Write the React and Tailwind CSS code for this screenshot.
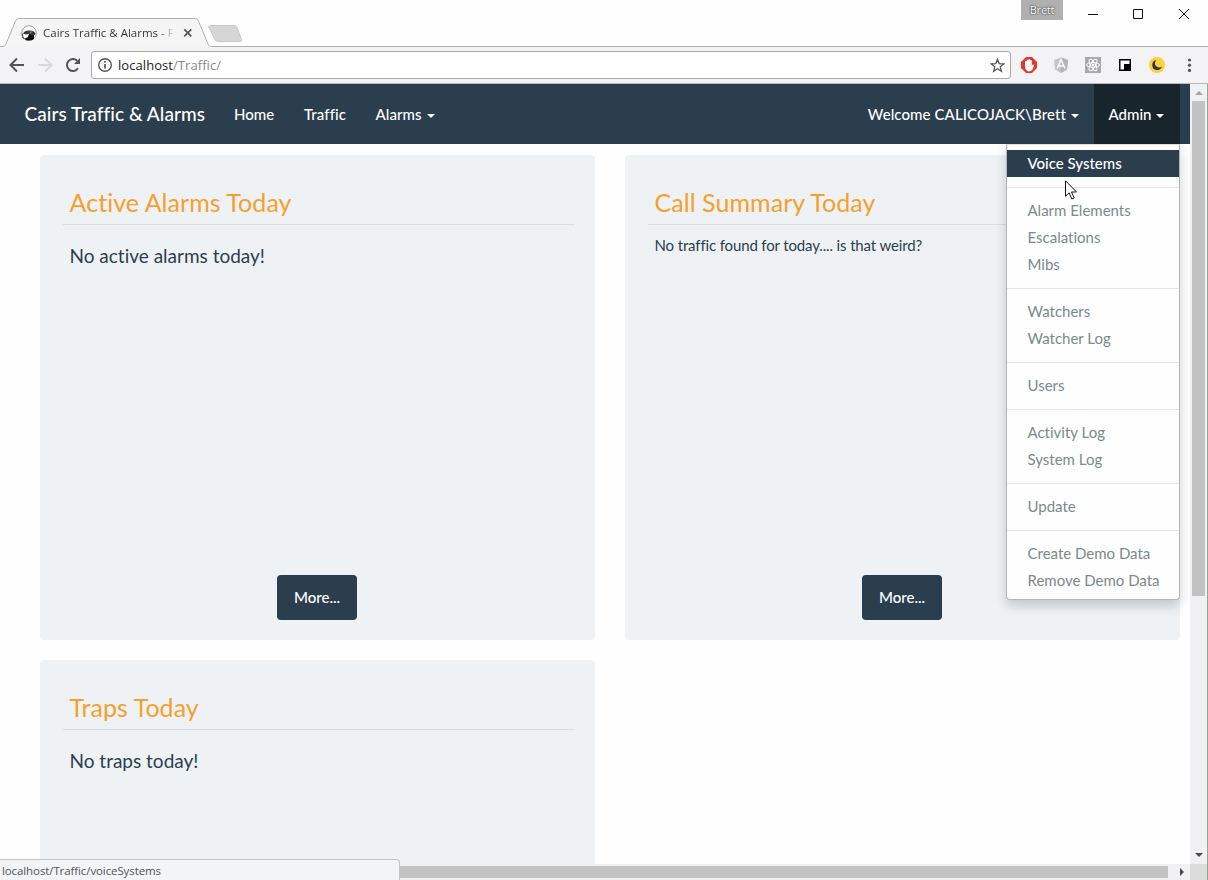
import React from "react";

const Caret = () => (
  <svg className="ml-[5px] mt-[3px] h-1 w-2" viewBox="0 0 8 4"><path d="M0 0h8L4 4z" fill="currentColor" /></svg>
);

const groups = [
  ["Alarm Elements", "Escalations", "Mibs"],
  ["Watchers", "Watcher Log"],
  ["Users"],
  ["Activity Log", "System Log"],
  ["Update"],
  ["Create Demo Data", "Remove Demo Data"],
];

function TabStrip() {
  return (
    <div className="relative flex h-[47px] bg-[#fefefe]">
      <svg className="absolute inset-0 h-[47px] w-[1208px]" viewBox="0 0 1208 47" fill="none">
        <path d="M0 46.5H3Q5 46.5 6 44L15.500 21Q16.500 18.500 18.500 18.500H195.500Q197.500 18.500 198.500 21L208 44Q209 46.500 211.500 46.500V47H0z" fill="#f5f5f6" />
        <path d="M0 46.500H3Q5 46.500 6 44L15.500 21Q16.500 18.500 18.500 18.500H195.500Q197.500 18.500 198.500 21L208 44Q209 46.500 211.500 46.500H1208" stroke="#b0b0b0" />
        <path d="M210.500 25.500H234Q236 25.500 237 27.500L241.500 39.500Q242 41.500 240 41.500H218Q216 41.500 215 39.500L208.800 27.500Q208 25.500 210.500 25.500z" fill="#d6d6d6" stroke="#c8c8c8" />
      </svg>
      <div className="relative mt-[19px] flex h-7 w-52 items-center pl-[21px]">
        <svg className="h-4 w-4" viewBox="0 0 16 16">
          <circle cx="8" cy="8" r="7.300" fill="#f8f8f8" stroke="#888" strokeWidth=".8" />
          <path d="M2 8.500Q4 5 9 5.500Q13.500 5.500 14.500 9L13 10.500 9 8.500 5 9.500z" fill="#333" />
          <path d="M8 8.500l5 1.500V14Q9.500 16.500 4.500 15L4 13.500 7 12z" fill="#111" />
          <path d="M1.500 8.500V12l2 2.200" stroke="#555" strokeWidth="1.200" fill="none" />
          <path d="M8 6.800l3-.4-1 1.600z" fill="#bbb" />
        </svg>
        <span className="ml-1.5 h-4 w-[132px] overflow-hidden whitespace-nowrap bg-gradient-to-r from-[#333] from-88% to-transparent bg-clip-text text-[11.500px] leading-4 text-transparent">Cairs Traffic &amp; Alarms - F</span>
        <svg className="ml-2 h-2.5 w-2.5" viewBox="0 0 10 10"><path d="M1.300 1.300l7 7m0-7l-7 7" stroke="#555" strokeWidth="1.700" /></svg>
      </div>
      <div className="relative ml-auto mr-[15px] flex">
        <div className="h-5 w-[42px] bg-[#b0b0b0] text-center text-[11px] leading-5 tracking-[-0.2px] text-white [text-shadow:0_0_2px_#333,0_0_1px_#333]">Brett</div>
        <svg className="ml-[23px] h-7 w-[107px]" viewBox="0 0 107 28" fill="none" stroke="#111">
          <path d="M2 14.500h10M47.500 9.500h9v9h-9zM93 9l10 10m0-10l-10 10" />
        </svg>
      </div>
    </div>
  );
}

function Toolbar() {
  return (
    <div className="flex h-[37px] items-center border-b border-[#b9b9bd] bg-[#f3f3f5] pl-[9px]">
      <svg className="h-4 w-[72px]" viewBox="0 0 72 16" fill="none" strokeWidth="2">
        <path d="M15 8H2M8 1.500L1.500 8 8 14.500" stroke="#555" />
        <path d="M29 8h13M36 1.500L42.500 8 36 14.500" stroke="#dadada" />
        <path d="M69 11.300A6 6 0 1 1 68.200 3.800" stroke="#555" />
        <path d="M71 1v6h-6z" fill="#555" />
      </svg>
      <div className="ml-[10px] flex h-7 w-[920px] items-center rounded-[3px] border border-[#a9a9ac] bg-white px-[5px]">
        <svg className="h-4 w-4" viewBox="0 0 16 16" fill="none" stroke="#555" strokeWidth="1.400"><circle cx="8" cy="8" r="6.300" /><path d="M8 7v4.500M8 4v1.800" strokeWidth="1.700" /></svg>
        <span className="ml-[5px] pt-px text-[13px] tracking-[0.06px] text-[#222]">localhost<span className="text-[#888]">/Traffic/</span></span>
        <svg className="ml-auto h-[15px] w-[15px]" viewBox="0 0 15 15" fill="none" stroke="#555" strokeWidth="1.300"><path d="M7.500 1.400l1.700 4.200 4.500.3-3.500 2.900 1.200 4.400-3.900-2.500-3.900 2.500 1.200-4.400-3.500-2.900 4.500-.3z" /></svg>
      </div>
      <div className="ml-[10px] flex gap-4">
        <svg className="h-4 w-4" viewBox="0 0 16 16"><path d="M5 0h6l5 5v6l-5 5H5l-5-5V5z" fill="#dd3a2b" /><path d="M4 8V4.500a.9.900 0 0 1 1.700 0V3a.9.900 0 0 1 1.700 0v-.5a.9.900 0 0 1 1.700 0V3.500a.9.900 0 0 1 1.700 0V9l1-1.500q1.300-.3 1.200 1L11.500 12.500Q10 14.500 8 14.500T4.500 12z" fill="#fff" /></svg>
        <svg className="h-4 w-4" viewBox="0 0 16 16"><path d="M8 .5l7 2.500-1 9.500L8 16l-6-3.500L1 3z" fill="#c4c4c4" /><path d="M8 .5l7 2.500-1 9.500L8 16z" fill="#b4b4b4" /><path d="M4 11.500L8 2.500l4 9M5.500 9h5" stroke="#fff" strokeWidth="1.500" fill="none" /></svg>
        <svg className="h-4 w-4" viewBox="0 0 16 16" fill="none" stroke="#fff"><path d="M0 0h16v16H0z" fill="#a8a8a8" stroke="none" /><ellipse cx="8" cy="8" rx="6.500" ry="2.400" /><ellipse cx="8" cy="8" rx="6.500" ry="2.400" transform="rotate(60 8 8)" /><ellipse cx="8" cy="8" rx="6.500" ry="2.400" transform="rotate(120 8 8)" /><circle cx="8" cy="8" r="1" fill="#fff" /></svg>
        <svg className="h-4 w-4" viewBox="0 0 16 16"><path d="M2 2h12v12H2z" fill="#000" /><path d="M3.500 3.500h9V7H7v5.500H3.500z" fill="#fff" /></svg>
        <svg className="h-4 w-4" viewBox="0 0 16 16"><circle cx="8" cy="8" r="8" fill="#fbd23c" /><path d="M7.500 3A5 5 0 1 0 13 9.500 4 4 0 0 1 7.500 3z" fill="#33334f" /></svg>
        <svg className="h-4 w-4" viewBox="0 0 16 16" fill="#555"><circle cx="8.500" cy="3" r="1.600" /><circle cx="8.500" cy="8.200" r="1.600" /><circle cx="8.500" cy="13.400" r="1.600" /></svg>
      </div>
    </div>
  );
}

function AdminMenu() {
  return (
    <div className="absolute right-0 top-[60px] z-10 w-[174px] rounded-b border border-[#b5b5b5] border-t-[#e5d9cf] bg-[#fefefe] py-[5px] [font-variant-ligatures:none] shadow-[0_6px_12px_rgba(0,0,0,0.175)]">
      <div className="h-[27px] bg-[#2b3e4e] pl-[20.500px] font-medium leading-[27px] text-white">Voice Systems</div>
      {groups.map((g) => (
        <div key={g[0]} className="mt-[10px] border-t border-[#e5e5e5] pt-[9px] text-[#7b8a8b]">
          {g.map((t) => <div key={t} className="h-[27px] whitespace-nowrap pl-[20.500px] leading-[27px]">{t}</div>)}
        </div>
      ))}
      <svg className="absolute left-[58px] top-[35px] h-5 w-3" viewBox="0 0 12 20"><path d="M.5.800v15.500l3.600-3.500 2.700 6.200 2.400-1-2.700-6h5z" fill="#fff" stroke="#111" /></svg>
    </div>
  );
}

function Navbar() {
  return (
    <nav className="flex h-[60px] items-center bg-[#2b3e4e] pr-[10px] text-[15px] text-white">
      <span className="ml-[24.500px] w-[209.500px] whitespace-nowrap text-[19px] font-medium tracking-[0.07px] [font-variant-ligatures:common-ligatures]">Cairs Traffic &amp; Alarms</span>
      <span className="w-[70px] font-medium">Home</span>
      <span className="w-[71.500px] font-medium tracking-[0.08px]">Traffic</span>
      <span className="flex items-center font-medium tracking-[0.08px]">Alarms<Caret /></span>
      <span className="ml-auto mr-[15px] flex items-center font-medium tracking-[0.09px]">Welcome CALICOJACK\Brett<Caret /></span>
      <div className="relative flex h-[60px] w-[86px] items-center justify-center bg-[#19252d]">
        <span className="mr-px flex items-center font-medium">Admin<Caret /></span>
        <AdminMenu />
      </div>
    </nav>
  );
}

function Card({ title, children, more }) {
  return (
    <section className="flex h-[485px] flex-col items-center rounded bg-[#eef2f5] px-[20px] pb-5 pt-7 [font-variant-ligatures:none]">
      <div className="ml-[3px] h-[42px] self-stretch border-b border-[#dadde1] pl-[6.500px] text-[25px] leading-[38px] tracking-[0.05px] text-[#f5a02c]">{title}</div>
      <div className="self-stretch pl-[9.500px]">{children}</div>
      {more && <button className="mr-[2px] mt-auto h-[45px] w-20 rounded bg-[#2b3e4e] pl-px text-[15px] font-medium text-white">More...</button>}
    </section>
  );
}

export default function App() {
  return (
    <div className="flex h-[880px] w-[1208px] flex-col overflow-hidden font-['Open_Sans',sans-serif]">
      <TabStrip />
      <Toolbar />
      <div className="flex h-[780px] border-r border-[#8fae7c]">
        <div className="flex w-[1190px] shrink-0 flex-col bg-[#fefefe] font-[Lato,sans-serif] text-[#2c3e50]">
          <Navbar />
          <main className="grid h-[720px] grid-cols-2 content-start gap-x-[30px] gap-y-5 overflow-hidden pl-10 pr-[10px] pt-[11px]">
            <Card title="Active Alarms Today" more><p className="mt-[17px] text-[19px] leading-7">No active alarms today!</p></Card>
            <Card title="Call Summary Today" more><p className="mt-[8px] text-[15px] leading-6 tracking-[-0.14px]">No traffic found for today.... is that weird?</p></Card>
            <Card title="Traps Today"><p className="mt-[17px] text-[19px] leading-7">No traps today!</p></Card>
          </main>
        </div>
        <div className="flex w-[17px] flex-col items-center bg-[#f1f1f3]">
          <svg className="mt-[7px] h-1 w-2" viewBox="0 0 8 4"><path d="M0 4h8L4 0z" fill="#a3a3a3" /></svg>
          <div className="mt-[6px] h-[495px] w-[13px] bg-[#c2c2c2]" />
          <svg className="mb-[7px] mt-auto h-1 w-2" viewBox="0 0 8 4"><path d="M0 0h8L4 4z" fill="#504848" /></svg>
        </div>
      </div>
      <div className="relative flex h-4 items-center border-r border-[#8fae7c] bg-[#f1f1f3]">
        <div className="ml-[399px] h-3 w-[769px] bg-[#c2c2c2]" />
        <svg className="ml-3 h-2 w-1" viewBox="0 0 4 8"><path d="M0 0v8l4-4z" fill="#504848" /></svg>
        <div className="ml-auto h-4 w-[17px] bg-[#dcdcdc]" />
        <div className="absolute bottom-0 left-0 h-[21px] w-[400px] rounded-tr border-r border-t border-[#c2c5c8] bg-[#f3f4f5] pl-0.5 text-[11.500px] leading-[21px] tracking-[-0.1px] text-[#555]">localhost/Traffic/voiceSystems</div>
      </div>
    </div>
  );
}
